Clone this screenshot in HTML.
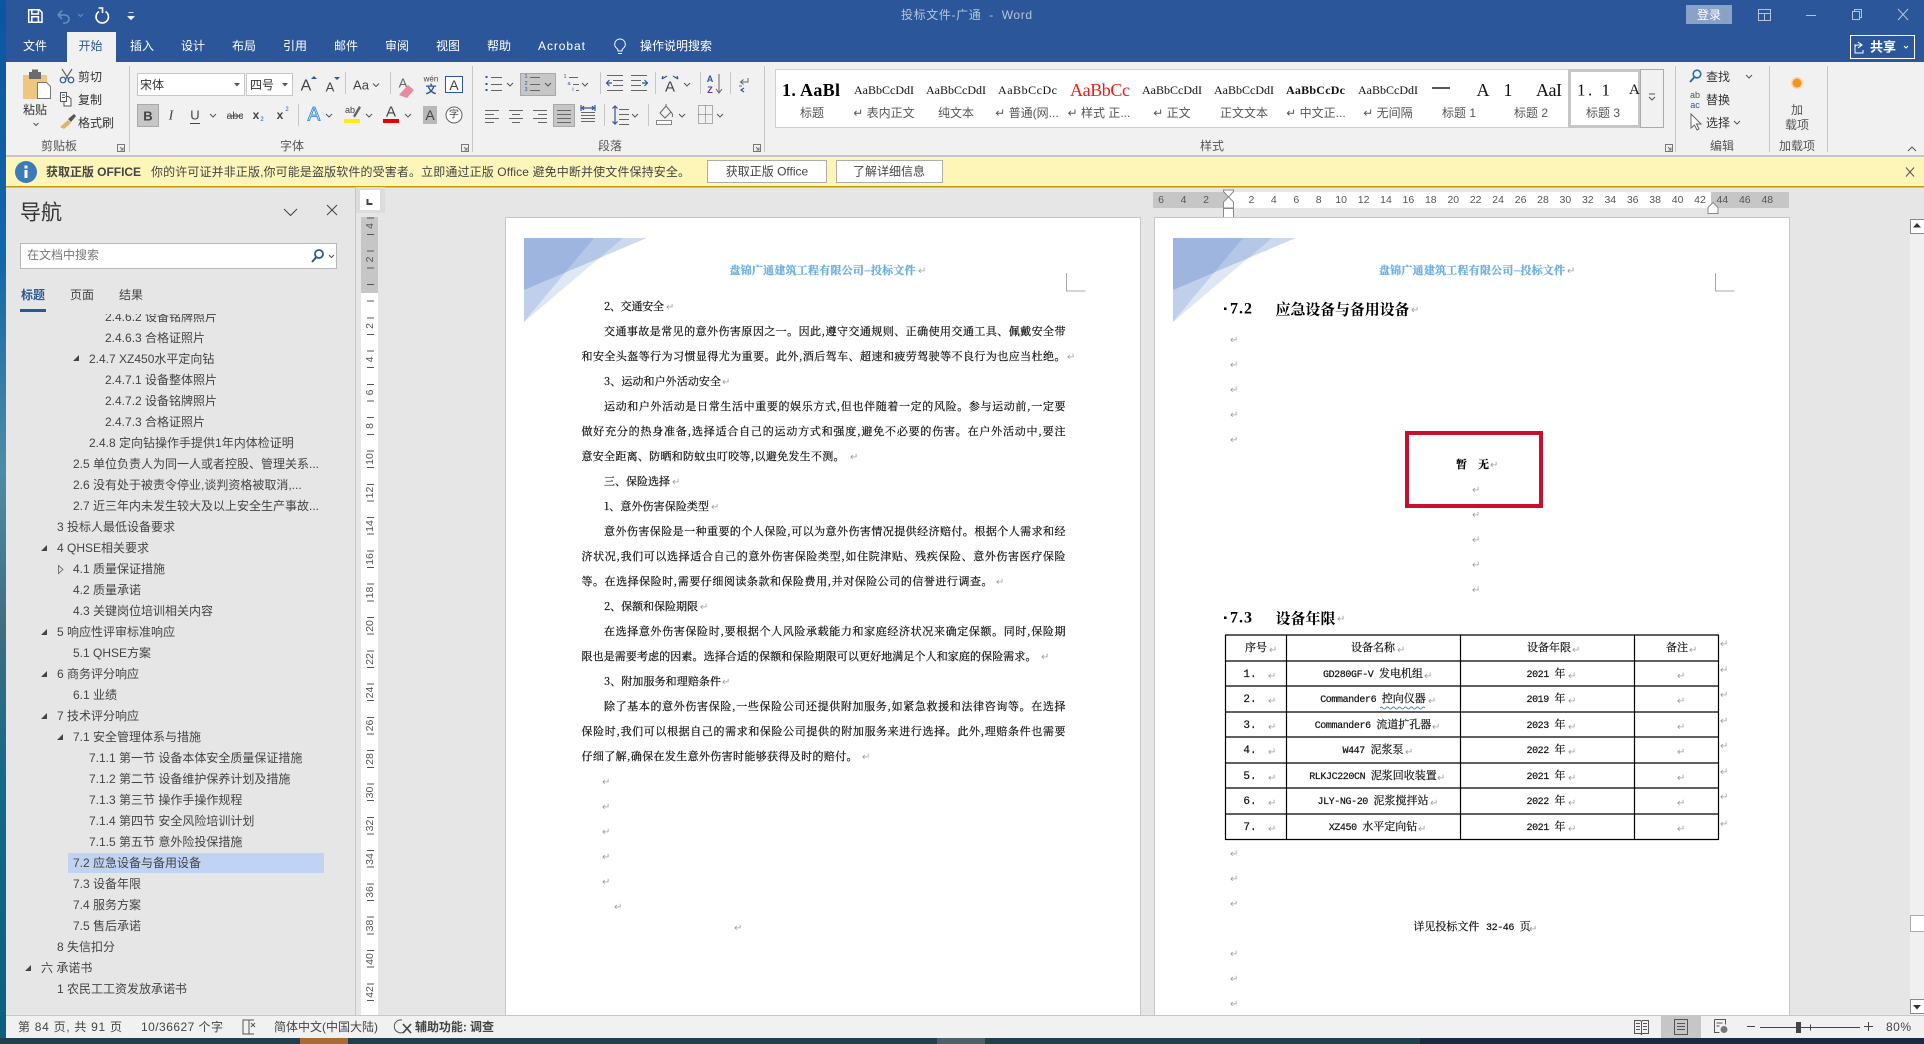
<!DOCTYPE html>
<html lang="zh-CN"><head><meta charset="utf-8"><title>投标文件-广通 - Word</title>
<style>
html,body{margin:0;padding:0;width:1924px;height:1044px;overflow:hidden;background:#e6e6e6}
svg{position:absolute;left:0;top:0;display:block}
text{dominant-baseline:central;font-family:"Liberation Sans","Noto Sans CJK SC",sans-serif;font-size:12px;fill:#444;white-space:pre}
.w{fill:#fff}.d{fill:#b4c4dc}.c{text-anchor:middle}
.g{font-size:12px;fill:#333}
.lb{font-size:12px;fill:#555;text-anchor:middle}
.s{font-family:"Liberation Serif","Noto Serif CJK SC",serif;font-size:12px;fill:#111}
.b{font-family:"Noto Serif CJK SC",serif;font-size:11px;fill:#111;stroke:#111;stroke-width:.22}
.h{font-family:"Noto Serif CJK SC",serif;font-size:11px;font-weight:700;fill:#6fb0e0;stroke:#6fb0e0;stroke-width:.3}
.hd{font-family:"Noto Serif CJK SC",serif;font-size:15px;font-weight:700;fill:#000}
.hn{font-family:"Liberation Serif",serif;font-size:16px;font-weight:700;fill:#000;letter-spacing:1px}
.r{font-family:"DejaVu Sans",sans-serif;font-size:10px;fill:#a0a0a0;transform:translate(1px,1.5px)}
.m{font-family:"Liberation Mono",monospace;font-size:10px;letter-spacing:-.4px}
.tb{font-family:"Liberation Mono","Noto Serif CJK SC",serif;font-size:11px;fill:#111;stroke:#111;stroke-width:.2;text-anchor:middle}
.hr{font-size:10.5px;fill:#555;text-anchor:middle}
.vr{font-size:10.5px;fill:#555;text-anchor:middle}
.lg{fill:none;stroke:#666;stroke-width:1}
.bl{fill:none;stroke:#2b579a;stroke-width:1.2}
.ch{fill:none;stroke:#555;stroke-width:1}
</style></head><body>
<svg width="1924" height="1044" viewBox="0 0 1924 1044" xmlns="http://www.w3.org/2000/svg">
<defs>
<linearGradient id="strip" x1="0" y1="0" x2="0" y2="1"><stop offset="0" stop-color="#0b55a0"/><stop offset=".25" stop-color="#1367a8"/><stop offset=".45" stop-color="#4d8ca6"/><stop offset=".6" stop-color="#3d7080"/><stop offset=".75" stop-color="#14688a"/><stop offset="1" stop-color="#0d5f80"/></linearGradient>
<clipPath id="treeclip"><rect x="6" y="314" width="349" height="702"/></clipPath>
</defs>
<!-- frame -->
<rect x="0" y="0" width="6" height="1044" fill="url(#strip)"/>
<rect x="0" y="1038" width="1924" height="6" fill="#21404c"/>
<rect x="300" y="1038" width="48" height="6" fill="#a96b35"/>
<rect x="937" y="1038" width="48" height="6" fill="#4c616a"/>
<rect x="1420" y="1038" width="504" height="6" fill="#1a2a42"/>
<rect x="6" y="0" width="1918" height="62" fill="#2b579a"/>
<rect x="6" y="62" width="1918" height="94" fill="#f1f1f1"/>
<rect x="6" y="155" width="1918" height="2" fill="#c6c6c6"/>
<rect x="6" y="157" width="1918" height="29" fill="#fdf6b8"/>
<rect x="6" y="186" width="1918" height="1.5" fill="#c19c00"/>
<rect x="67" y="32" width="49" height="30" fill="#f1f1f1"/>

<!-- QAT -->
<path d="M28.7 9.7h10.6l2.7 2.7v9.9H28.7z M31.8 9.7v4.3h6.6V9.7 M31.8 22.3v-5.5h6.6v5.5" fill="none" stroke="#fff" stroke-width="1.5"/>
<path d="M58 15l4-4.5M58 15l4 4M58 15h7a4 4 0 0 1 0 8h-2" fill="none" stroke="#6b8dbd" stroke-width="1.6"/>
<path d="M78 14l2.5 2.5 2.5-2.5" fill="none" stroke="#6b8dbd" stroke-width="1"/>
<path d="M99 11.5a6.2 6.2 0 1 0 6.5 0M98.500 8h4v5" fill="none" stroke="#fff" stroke-width="1.6"/>
<path d="M128.500 12.500h5M128 16.500h6l-3 3z" fill="#fff" stroke="#fff" stroke-width=".8"/>
<!-- title -->
<text x="901" y="15" class="d" textLength="131">投标文件-广通  -  Word</text>
<rect x="1686" y="5" width="46" height="19" fill="#8aa2c6"/>
<text x="1709" y="15" class="w c">登录</text>
<path d="M1758.500 9.500h12v11h-12zM1758.500 13.500h12M1764.500 13.500v7" fill="none" stroke="#b4c4dc"/>
<path d="M1806 15.500h10" stroke="#b4c4dc"/>
<path d="M1852.500 11.500h7v8h-7zM1854.500 11.500v-2h7v8h-2" fill="none" stroke="#b4c4dc"/>
<path d="M1898 9l10 11M1908 9l-10 11" stroke="#b4c4dc"/>
<!-- tabs -->
<text x="23" y="46" class="w">文件</text>
<text x="78.500" y="46" style="fill:#2b579a">开始</text>
<text x="130" y="46" class="w">插入</text>
<text x="181" y="46" class="w">设计</text>
<text x="232" y="46" class="w">布局</text>
<text x="283" y="46" class="w">引用</text>
<text x="334" y="46" class="w">邮件</text>
<text x="385" y="46" class="w">审阅</text>
<text x="436" y="46" class="w">视图</text>
<text x="487" y="46" class="w">帮助</text>
<text x="538" y="46" class="w" textLength="47">Acrobat</text>
<path d="M620 39a5.200 5.200 0 0 0-3 9.500c.7.6 1 1.400 1 2.500h4c0-1.100.3-1.900 1-2.500A5.200 5.200 0 0 0 620 39zM618 53.500h4" fill="none" stroke="#fff" stroke-width="1"/>
<text x="640" y="46" class="w" textLength="72">操作说明搜索</text>
<rect x="1850.500" y="35.500" width="64" height="23" fill="none" stroke="#fff"/>
<path d="M1858 42l4 3-4 3M1861.500 45h-4a2.500 2.500 0 0 0-2.500 2.500M1855 44v9h8v-3" fill="none" stroke="#fff" stroke-width="1"/>
<text x="1870" y="47" class="w" style="font-size:13px;font-weight:700">共享</text>
<path d="M1904 46l2 2 2-2" fill="none" stroke="#fff"/>

<!-- ribbon separators -->
<path d="M129.500 66v86M472.500 66v86M764.500 66v86M1675.500 66v86M1769.500 66v86M1827.500 66v86" stroke="#c6c6c6"/>
<!-- clipboard -->
<rect x="23" y="75" width="24" height="24" fill="#eec682"/>
<rect x="29" y="72" width="12" height="7" fill="#6b6b6b"/><rect x="32" y="69.500" width="6" height="4" fill="#6b6b6b"/>
<path d="M37.500 82.500h9l4 4v12h-13z" fill="#fff" stroke="#777"/>
<text x="35" y="110" class="g c">粘贴</text>
<path d="M33.500 123l2.500 2.500 2.500-2.500" class="ch"/>
<path d="M62 69l7 11M72 69l-7 11" fill="none" stroke="#666" stroke-width="1.200"/>
<circle cx="63" cy="80" r="2.800" class="bl"/><circle cx="71" cy="80" r="2.800" class="bl"/>
<text x="78" y="77" class="g">剪切</text>
<path d="M60.500 92.500h6v9h-6zM65.500 96.500h3l2.500 2.500v7h-7v-4" fill="#fff" stroke="#555"/>
<path d="M62 95h3M62 97.500h3" stroke="#2b579a"/>
<text x="78" y="100" class="g">复制</text>
<path d="M60 127l8-7 3 3-7 6z" fill="#e2b565"/><path d="M68 119l6-5 2 2-5 6z" fill="#555"/>
<text x="78" y="123" class="g">格式刷</text>
<text x="59" y="146" class="lb">剪贴板</text>
<path d="M117.500 144.500h7v7h-7zM120 147l3 3M123 147.500v2.500h-2.500" fill="none" stroke="#777"/>
<!-- font group -->
<rect x="137.500" y="73.500" width="107" height="22" fill="#fff" stroke="#c6c6c6"/>
<text x="140" y="85" class="g">宋体</text><path d="M234 83h6l-3 3.500z" fill="#555"/>
<rect x="246.500" y="73.500" width="46" height="22" fill="#fff" stroke="#c6c6c6"/>
<text x="250" y="85" class="g">四号</text><path d="M282 83h6l-3 3.500z" fill="#555"/>
<text x="306" y="86" class="c" style="font-size:16px">A</text><path d="M311 79h6l-3-3z" fill="#2b579a"/>
<text x="330" y="87" class="c" style="font-size:13px">A</text><path d="M334 77h6l-3 3z" fill="#2b579a"/>
<path d="M345.500 72v22M390.500 72v22M437 0" stroke="#c6c6c6"/>
<text x="361" y="85" class="c" style="font-size:13px">Aa</text><path d="M373 83.500l3 3 3-3" class="ch"/>
<text x="403" y="83" class="c" style="font-size:13px;fill:#666">A</text><path d="M399 95l9-10 6 5-7 8z" fill="#e88aa0"/>
<text x="431" y="79" class="c" style="font-size:8px">wén</text><text x="431" y="90" class="c" style="font-size:11px;fill:#2b579a;font-weight:700">文</text>
<rect x="445.500" y="76.500" width="17" height="16" fill="#fff" stroke="#2b579a"/><text x="454" y="85" class="c" style="font-size:14px">A</text>
<rect x="137" y="104" width="22" height="23" fill="#c6c6c6"/><rect x="137.500" y="104.500" width="21" height="22" fill="none" stroke="#a8a8a8"/>
<text x="148" y="116" class="c" style="font-weight:700;font-size:13px">B</text>
<text x="171" y="116" class="c" style="font-style:italic;font-family:'Liberation Serif',serif;font-size:14px">I</text>
<text x="195" y="115" class="c" style="font-size:13px">U</text><path d="M190 123.500h10" stroke="#444"/><path d="M210 114l3 3 3-3" class="ch"/>
<text x="235" y="116" class="c" style="font-size:10.500px">abc</text><path d="M227 116h16" stroke="#444"/>
<text x="256" y="115" class="c" style="font-weight:700;font-size:12px">x</text><text x="262" y="120" class="c" style="font-size:6px;fill:#2b579a">2</text>
<text x="280" y="115" class="c" style="font-weight:700;font-size:12px">x</text><text x="287" y="110" class="c" style="font-size:6px;fill:#2b579a">2</text>
<path d="M298.500 104v22M422 0" stroke="#c6c6c6"/>
<text x="314" y="115" class="c" style="font-size:19px;fill:#dbe8f8;stroke:#2f7fd0;stroke-width:.8">A</text><path d="M326 114l3 3 3-3" class="ch"/>
<text x="350" y="110" class="c" style="font-size:9px">ab</text><path d="M353 116l6-10 2 1.500-6 10z" fill="#666"/><rect x="344" y="119" width="16" height="4" fill="#ffee00"/><path d="M366 114l3 3 3-3" class="ch"/>
<text x="391" y="112" class="c" style="font-size:15px">A</text><rect x="383" y="119" width="16" height="4" fill="#e60000"/><path d="M405 114l3 3 3-3" class="ch"/>
<rect x="423" y="106" width="14" height="18" fill="#b8b8b8"/><text x="430" y="115" class="c" style="font-size:14px">A</text>
<circle cx="454" cy="115" r="8" fill="#fff" stroke="#666"/><text x="454" y="115" class="c" style="font-size:10px">字</text>
<text x="292" y="146" class="lb">字体</text>
<path d="M461.500 144.500h7v7h-7zM464 147l3 3M467 147.500v2.500h-2.500" fill="none" stroke="#777"/>
<!-- paragraph group -->
<path d="M491 77.500h11M491 84.500h11M491 90.500h11" class="lg"/><path d="M485.500 76h2v2h-2zM485.500 83h2v2h-2zM485.500 89h2v2h-2z" fill="#2b579a"/><path d="M507 83l3 3 3-3" class="ch"/>
<rect x="520" y="73" width="36" height="23" fill="#c6c6c6"/><rect x="520.500" y="73.500" width="35" height="22" fill="none" stroke="#a8a8a8"/>
<path d="M530 77.500h10M530 84.500h10M530 90.500h10" class="lg"/><text x="526" y="77" class="c" style="font-size:5.500px;fill:#2b579a">1</text><text x="526" y="84" class="c" style="font-size:5.500px;fill:#2b579a">2</text><text x="526" y="90" class="c" style="font-size:5.500px;fill:#2b579a">3</text><path d="M545 83l3 3 3-3" class="ch"/>
<text x="565" y="77" class="c" style="font-size:5.500px;fill:#2b579a">1</text><text x="569" y="84" class="c" style="font-size:5.500px;fill:#2b579a">a</text><text x="573" y="90" class="c" style="font-size:5.500px;fill:#2b579a">i</text>
<path d="M569 77.500h9M573 84.500h6M576 90.500h3" class="lg"/><path d="M582 83l3 3 3-3" class="ch"/>
<path d="M600.500 72v22M655.500 72v22M700.500 72v22M730.500 72v22" stroke="#c6c6c6"/>
<path d="M607 75.500h16M613 80.500h10M613 85.500h10M607 90.500h16" class="lg"/><path d="M612 83h-5m2.500-3l-3 3 3 3" class="bl"/>
<path d="M631 75.500h16M631 80.500h10M631 85.500h10M631 90.500h16" class="lg"/><path d="M642 83h5m-2.500-3l3 3-3 3" class="bl"/>
<text x="670" y="87" class="c" style="font-size:15px">A</text><path d="M662 79l5-3M678 79l-5-3M662 79l1-3M678 79l-1-3" class="bl"/><path d="M684 83l3 3 3-3" class="ch"/>
<text x="710" y="79" class="c" style="font-size:9px;fill:#2b579a;font-weight:700">A</text><text x="710" y="90" class="c" style="font-size:9px;fill:#7030a0;font-weight:700">Z</text><path d="M719 74v19m-3-4l3 4 3-4" class="lg"/>
<path d="M748 78v4h-7m2.500-2.500l-3 2.500 3 2.500M742 86h-3m0 0v0" class="lg"/><path d="M744 88l-3 2 3 2" class="bl"/>
<path d="M485 110.500h14M485 114.500h9M485 118.500h14M485 122.500h9" class="lg"/>
<path d="M509 110.500h14M512 114.500h8M509 118.500h14M512 122.500h8" class="lg"/>
<path d="M533 110.500h14M538 114.500h9M533 118.500h14M538 122.500h9" class="lg"/>
<rect x="553" y="104" width="22" height="23" fill="#c6c6c6"/><rect x="553.500" y="104.500" width="21" height="22" fill="none" stroke="#a8a8a8"/><path d="M557 110.500h14M557 114.500h14M557 118.500h14M557 122.500h14" class="lg"/>
<path d="M581 112.500h14M581 115.500h14M581 118.500h14M581 121.500h14" class="lg"/><path d="M582 108h12M584 106l-2 2 2 2M592 106l2 2-2 2M581 105v6M595 105v6" class="bl"/>
<path d="M604.500 104v22M648.500 104v22" stroke="#c6c6c6"/>
<path d="M619 109.500h10M619 114.500h10M619 119.500h10M619 124.500h10" class="lg"/><path d="M615 106v18m-2.500-15.500l2.500-2.500 2.500 2.500m-5 13l2.500 2.500 2.500-2.500" class="bl"/><path d="M632 114l3 3 3-3" class="ch"/>
<path d="M660 113l6-7 5 6-6 6zM666 106v-2" fill="none" stroke="#666"/><path d="M671 112c2 2 2 4 1 5" fill="none" stroke="#666"/><rect x="656.500" y="120.500" width="15" height="4" fill="#fff" stroke="#888"/><path d="M679 114l3 3 3-3" class="ch"/>
<path d="M698.500 105.500h14v18h-14zM698.500 114.500h14M705.500 105.500v18" fill="none" stroke="#666" stroke-dasharray="1 1"/><path d="M717 114l3 3 3-3" class="ch"/>
<text x="610" y="146" class="lb">段落</text>
<path d="M753.500 144.500h7v7h-7zM756 147l3 3M759 147.500v2.500h-2.500" fill="none" stroke="#777"/>
<!-- styles -->
<rect x="775.500" y="69.500" width="888" height="58" fill="#fff" stroke="#d0d0d0"/>
<rect x="1569.500" y="70.500" width="70" height="56" fill="#fff" stroke="#c6c6c6" stroke-width="3"/>
<rect x="1640.500" y="69.500" width="23" height="58" fill="#f1f1f1" stroke="#aaa"/>
<path d="M1649 94h6M1649 97l3 3 3-3" class="ch"/>
<text x="782" y="90" class="s" textLength="58" style="font-weight:700;font-size:18px;fill:#000">1. AaBl</text>
<text x="854" y="90" class="s" textLength="60">AaBbCcDdI</text>
<text x="926" y="90" class="s" textLength="60">AaBbCcDdI</text>
<text x="998" y="90" class="s" textLength="59">AaBbCcDc</text>
<text x="1070" y="90" class="s" textLength="60" style="font-size:18px;fill:#f01818">AaBbCc</text>
<text x="1142" y="90" class="s" textLength="60">AaBbCcDdI</text>
<text x="1214" y="90" class="s" textLength="60">AaBbCcDdI</text>
<text x="1286" y="90" class="s" textLength="59" style="font-weight:700">AaBbCcDc</text>
<text x="1358" y="90" class="s" textLength="60">AaBbCcDdI</text>
<path d="M1432 88h18" stroke="#222" stroke-width="1.500"/>
<text x="1483" y="90" class="c s" style="font-size:18px">A</text>
<text x="1508" y="90" class="c s" style="font-size:18px">1</text>
<text x="1536" y="90" class="s" textLength="26" style="font-size:18px">AaI</text>
<text x="1577" y="90" class="s" textLength="33" style="font-size:17px">1. 1</text>
<text x="1629" y="90" class="s" style="font-size:15px">A</text>
<text x="812" y="113" class="lb">标题</text>
<text x="884" y="113" class="lb">↵ 表内正文</text>
<text x="956" y="113" class="lb">纯文本</text>
<text x="1027" y="113" class="lb">↵ 普通(网...</text>
<text x="1099" y="113" class="lb">↵ 样式 正...</text>
<text x="1172" y="113" class="lb">↵ 正文</text>
<text x="1244" y="113" class="lb">正文文本</text>
<text x="1316" y="113" class="lb">↵ 中文正...</text>
<text x="1388" y="113" class="lb">↵ 无间隔</text>
<text x="1459" y="113" class="lb">标题 1</text>
<text x="1531" y="113" class="lb">标题 2</text>
<text x="1603" y="113" class="lb">标题 3</text>
<text x="1212" y="146" class="lb">样式</text>
<path d="M1665.500 144.500h7v7h-7zM1668 147l3 3M1671 147.500v2.500h-2.500" fill="none" stroke="#777"/>
<!-- editing -->
<circle cx="1697" cy="74" r="3.800" fill="none" stroke="#2b6cb5" stroke-width="1.600"/><path d="M1694.500 77l-4.500 5" stroke="#2b6cb5" stroke-width="2"/>
<text x="1706" y="77" class="g">查找</text><path d="M1746 75l3 3 3-3" class="ch"/>
<text x="1695" y="95" class="c" style="font-size:9px;fill:#555">ab</text><text x="1695" y="105" class="c" style="font-size:9px;fill:#2b579a">ac</text>
<text x="1706" y="100" class="g">替换</text>
<path d="M1691 114v14l3.500-3 2.500 5 2-1-2.500-5h4.500z" fill="#fff" stroke="#666"/>
<text x="1706" y="123" class="g">选择</text><path d="M1734 121l3 3 3-3" class="ch"/>
<text x="1722" y="146" class="lb">编辑</text>
<circle cx="1797" cy="83" r="4.500" fill="#f7941d"/><circle cx="1797" cy="83" r="6" fill="#f7941d" opacity=".25"/>
<text x="1797" y="110" class="lb">加</text><text x="1797" y="125" class="lb">载项</text>
<text x="1797" y="146" class="lb">加载项</text>
<path d="M1908 151l4-4 4 4" class="ch"/>
<!-- notification -->
<circle cx="26" cy="172" r="11" fill="#3c7ab8"/><rect x="24.500" y="170" width="3" height="8" fill="#fff"/><rect x="24.500" y="165.500" width="3" height="3" fill="#fff"/>
<text x="46" y="172" style="font-weight:700;fill:#444" textLength="95">获取正版 OFFICE</text>
<text x="151" y="172" fill="#555" textLength="539">你的许可证并非正版,你可能是盗版软件的受害者。立即通过正版 Office 避免中断并使文件保持安全。</text>
<rect x="707.500" y="160.500" width="119" height="22" fill="#fff" stroke="#adadad"/>
<text x="767" y="171.500" class="c">获取正版 Office</text>
<rect x="836.500" y="160.500" width="106" height="22" fill="#fff" stroke="#adadad"/>
<text x="889" y="171.500" class="c">了解详细信息</text>
<path d="M1906 167.500l8 9M1914 167.500l-8 9" stroke="#555"/>

<!-- nav pane -->
<path d="M355.500 187v829" stroke="#c6c6c6"/>
<text x="20" y="213" style="font-size:21px;fill:#333">导航</text>
<path d="M284 209l6.500 6.500 6.500-6.500M327 205l10 10M337 205l-10 10" fill="none" stroke="#444"/>
<rect x="20.500" y="243.500" width="316" height="25" fill="#fff" stroke="#b8b8b8"/>
<text x="27" y="255" style="fill:#777">在文档中搜索</text>
<circle cx="319" cy="254" r="4" fill="none" stroke="#2b579a" stroke-width="1.800"/><path d="M316 257.500l-4 4.500" stroke="#2b579a" stroke-width="2"/><path d="M329 255l2.500 2.500 2.500-2.500" class="ch"/>
<text x="21" y="295" style="fill:#2b579a;font-weight:700">标题</text>
<text x="70" y="295">页面</text>
<text x="119" y="295">结果</text>
<rect x="20" y="309" width="26" height="3" fill="#2b579a"/>
<rect x="68" y="853" width="256" height="20" fill="#c0d3f2"/>
<g clip-path="url(#treeclip)"><g transform="translate(0 1)">
<text x="105" y="316">2.4.6.2 设备铭牌照片</text>
<text x="105" y="337">2.4.6.3 合格证照片</text>
<text x="89" y="358">2.4.7 XZ450水平定向钻</text>
<text x="105" y="379">2.4.7.1 设备整体照片</text>
<text x="105" y="400">2.4.7.2 设备铭牌照片</text>
<text x="105" y="421">2.4.7.3 合格证照片</text>
<text x="89" y="442">2.4.8 定向钻操作手提供1年内体检证明</text>
<text x="73" y="463">2.5 单位负责人为同一人或者控股、管理关系...</text>
<text x="73" y="484">2.6 没有处于被责令停业,谈判资格被取消,...</text>
<text x="73" y="505">2.7 近三年内未发生较大及以上安全生产事故...</text>
<text x="57" y="526">3 投标人最低设备要求</text>
<text x="57" y="547">4 QHSE相关要求</text>
<text x="73" y="568">4.1 质量保证措施</text>
<text x="73" y="589">4.2 质量承诺</text>
<text x="73" y="610">4.3 关键岗位培训相关内容</text>
<text x="57" y="631">5 响应性评审标准响应</text>
<text x="73" y="652">5.1 QHSE方案</text>
<text x="57" y="673">6 商务评分响应</text>
<text x="73" y="694">6.1 业绩</text>
<text x="57" y="715">7 技术评分响应</text>
<text x="73" y="736">7.1 安全管理体系与措施</text>
<text x="89" y="757">7.1.1 第一节 设备本体安全质量保证措施</text>
<text x="89" y="778">7.1.2 第二节 设备维护保养计划及措施</text>
<text x="89" y="799">7.1.3 第三节 操作手操作规程</text>
<text x="89" y="820">7.1.4 第四节 安全风险培训计划</text>
<text x="89" y="841">7.1.5 第五节 意外险投保措施</text>
<text x="73" y="862">7.2 应急设备与备用设备</text>
<text x="73" y="883">7.3 设备年限</text>
<text x="73" y="904">7.4 服务方案</text>
<text x="73" y="925">7.5 售后承诺</text>
<text x="57" y="946">8 失信扣分</text>
<text x="41" y="967">六 承诺书</text>
<text x="57" y="988">1 农民工工资发放承诺书</text>
</g></g>
<path d="M79 355v6h-6zM47 545v6h-6zM47 629v6h-6zM47 671v6h-6zM47 713v6h-6zM63 734v6h-6zM31 965v6h-6z" fill="#444"/>
<path d="M58.500 565.500v8l4.500-4z" fill="none" stroke="#777"/>

<!-- vertical ruler -->
<rect x="356" y="187" width="29" height="26" fill="#dcdcdc"/>
<rect x="360" y="190" width="20" height="20" fill="#fff"/>
<path d="M367.500 199v5h5" fill="none" stroke="#444" stroke-width="2"/>
<rect x="361" y="217" width="17" height="799" fill="#fff"/>
<rect x="361" y="217" width="17" height="76" fill="#c6c6c6"/>
<path stroke="#555" d="M367 218h7M367 234.500h7M367 251h7M367 268h7M367 284.500h7M367 301h7M367 318h7M367 334.500h7M367 351h7M367 367.500h7M367 384.500h7M367 401h7M367 417.500h7M367 434.500h7M367 451h7M367 467.500h7M367 484.500h7M367 501h7M367 517.500h7M367 534h7M367 551h7M367 567.500h7M367 584h7M367 601h7M367 617.500h7M367 634h7M367 651h7M367 667.500h7M367 684h7M367 700.500h7M367 717.500h7M367 734h7M367 750.500h7M367 767.500h7M367 784h7M367 800.500h7M367 817.500h7M367 834h7M367 850.500h7M367 867h7M367 884h7M367 900.500h7M367 917h7M367 934h7M367 950.500h7M367 967h7M367 984h7M367 1000.500h7"/>
<text class="vr" transform="translate(370 226) rotate(-90)">4</text>
<text class="vr" transform="translate(370 259.500) rotate(-90)">2</text>
<text class="vr" transform="translate(370 326) rotate(-90)">2</text>
<text class="vr" transform="translate(370 359.500) rotate(-90)">4</text>
<text class="vr" transform="translate(370 392.500) rotate(-90)">6</text>
<text class="vr" transform="translate(370 426) rotate(-90)">8</text>
<text class="vr" transform="translate(370 459) rotate(-90)">10</text>
<text class="vr" transform="translate(370 492.500) rotate(-90)">12</text>
<text class="vr" transform="translate(370 526) rotate(-90)">14</text>
<text class="vr" transform="translate(370 559) rotate(-90)">16</text>
<text class="vr" transform="translate(370 592.500) rotate(-90)">18</text>
<text class="vr" transform="translate(370 626) rotate(-90)">20</text>
<text class="vr" transform="translate(370 659) rotate(-90)">22</text>
<text class="vr" transform="translate(370 692.500) rotate(-90)">24</text>
<text class="vr" transform="translate(370 725.500) rotate(-90)">26</text>
<text class="vr" transform="translate(370 759) rotate(-90)">28</text>
<text class="vr" transform="translate(370 792.500) rotate(-90)">30</text>
<text class="vr" transform="translate(370 825.500) rotate(-90)">32</text>
<text class="vr" transform="translate(370 859) rotate(-90)">34</text>
<text class="vr" transform="translate(370 892) rotate(-90)">36</text>
<text class="vr" transform="translate(370 925.500) rotate(-90)">38</text>
<text class="vr" transform="translate(370 959) rotate(-90)">40</text>
<text class="vr" transform="translate(370 992) rotate(-90)">42</text>

<!-- horizontal ruler -->
<rect x="1153" y="192" width="636" height="16" fill="#c6c6c6"/>
<rect x="1228" y="192" width="483" height="16" fill="#fff"/>
<text class="hr" x="1161" y="200">6</text><text class="hr" x="1183.600" y="200">4</text><text class="hr" x="1206" y="200">2</text>
<text class="hr" x="1251.400" y="200">2</text><text class="hr" x="1273.800" y="200">4</text><text class="hr" x="1296.300" y="200">6</text><text class="hr" x="1318.700" y="200">8</text><text class="hr" x="1341.100" y="200">10</text><text class="hr" x="1363.600" y="200">12</text><text class="hr" x="1386" y="200">14</text><text class="hr" x="1408.400" y="200">16</text><text class="hr" x="1430.800" y="200">18</text><text class="hr" x="1453.300" y="200">20</text><text class="hr" x="1475.700" y="200">22</text><text class="hr" x="1498.100" y="200">24</text><text class="hr" x="1520.600" y="200">26</text><text class="hr" x="1543" y="200">28</text><text class="hr" x="1565.400" y="200">30</text><text class="hr" x="1587.800" y="200">32</text><text class="hr" x="1610.300" y="200">34</text><text class="hr" x="1632.700" y="200">36</text><text class="hr" x="1655.100" y="200">38</text><text class="hr" x="1677.600" y="200">40</text><text class="hr" x="1700" y="200">42</text><text class="hr" x="1722.400" y="200">44</text><text class="hr" x="1744.800" y="200">46</text><text class="hr" x="1767.300" y="200">48</text>
<path d="M1223.500 190v1.500l5 5.500 5-5.500V190zM1223.500 208v-6l5-5 5 5v6zM1223.500 208.500h10v11h-10z" fill="#fff" stroke="#8a8a8a"/>
<path d="M1708 213.500v-6l5-5 5 5v6z" fill="#fff" stroke="#8a8a8a"/>

<!-- pages -->
<rect x="505.500" y="217.500" width="635" height="800" fill="#fff" stroke="#c6c6c6"/>
<rect x="1154.500" y="217.500" width="635" height="800" fill="#fff" stroke="#c6c6c6"/>
<!-- header art left -->
<g fill="#4472c4"><path d="M524 238h122.700L524 290z" fill-opacity=".27"/><path d="M524 238h99L524 322z" fill-opacity=".17"/><path d="M524 238h70L524 322z" fill-opacity=".2"/></g>
<g fill="#4472c4"><path d="M1173 238h122.700L1173 290z" fill-opacity=".27"/><path d="M1173 238h99L1173 322z" fill-opacity=".17"/><path d="M1173 238h70L1173 322z" fill-opacity=".2"/></g>
<text x="729.500" y="270" class="h" textLength="186">盘锦广通建筑工程有限公司–投标文件</text><text x="917" y="270" class="r">↵</text>
<text x="1379" y="270" class="h" textLength="186">盘锦广通建筑工程有限公司–投标文件</text><text x="1566" y="270" class="r">↵</text>
<path d="M1066.500 273v18h19M1715.500 273v18h19" fill="none" stroke="#a8a8a8"/>

<!-- left page text -->
<text class="b" x="604" y="306" textLength="60">2、交通安全</text><text class="r" x="665" y="306">↵</text>
<text class="b" x="604" y="331" textLength="461.500">交通事故是常见的意外伤害原因之一。因此,遵守交通规则、正确使用交通工具、佩戴安全带</text>
<text class="b" x="581.500" y="356" textLength="484">和安全头盔等行为习惯显得尤为重要。此外,酒后驾车、超速和疲劳驾驶等不良行为也应当杜绝。</text><text class="r" x="1066" y="356">↵</text>
<text class="b" x="604" y="381" textLength="117">3、运动和户外活动安全</text><text class="r" x="721" y="381">↵</text>
<text class="b" x="604" y="406" textLength="461.500">运动和户外活动是日常生活中重要的娱乐方式,但也伴随着一定的风险。参与运动前,一定要</text>
<text class="b" x="581.500" y="431" textLength="484">做好充分的热身准备,选择适合自己的运动方式和强度,避免不必要的伤害。在户外活动中,要注</text>
<text class="b" x="581.500" y="456" textLength="263">意安全距离、防晒和防蚊虫叮咬等,以避免发生不测。</text><text class="r" x="849" y="456">↵</text>
<text class="b" x="604" y="481" textLength="66">三、保险选择</text><text class="r" x="671" y="481">↵</text>
<text class="b" x="604" y="506" textLength="105">1、意外伤害保险类型</text><text class="r" x="710" y="506">↵</text>
<text class="b" x="604" y="531" textLength="461.500">意外伤害保险是一种重要的个人保险,可以为意外伤害情况提供经济赔付。根据个人需求和经</text>
<text class="b" x="581.500" y="556" textLength="484">济状况,我们可以选择适合自己的意外伤害保险类型,如住院津贴、残疾保险、意外伤害医疗保险</text>
<text class="b" x="581.500" y="581" textLength="411">等。在选择保险时,需要仔细阅读条款和保险费用,并对保险公司的信誉进行调查。</text><text class="r" x="995" y="581">↵</text>
<text class="b" x="604" y="606" textLength="94">2、保额和保险期限</text><text class="r" x="699" y="606">↵</text>
<text class="b" x="604" y="631" textLength="461.500">在选择意外伤害保险时,要根据个人风险承载能力和家庭经济状况来确定保额。同时,保险期</text>
<text class="b" x="581.500" y="656" textLength="455">限也是需要考虑的因素。选择合适的保额和保险期限可以更好地满足个人和家庭的保险需求。</text><text class="r" x="1040" y="656">↵</text>
<text class="b" x="604" y="681" textLength="117">3、附加服务和理赔条件</text><text class="r" x="721" y="681">↵</text>
<text class="b" x="604" y="706" textLength="461.500">除了基本的意外伤害保险,一些保险公司还提供附加服务,如紧急救援和法律咨询等。在选择</text>
<text class="b" x="581.500" y="731" textLength="484">保险时,我们可以根据自己的需求和保险公司提供的附加服务来进行选择。此外,理赔条件也需要</text>
<text class="b" x="581.500" y="756" textLength="276">仔细了解,确保在发生意外伤害时能够获得及时的赔付。</text><text class="r" x="861" y="756">↵</text>
<text class="r" x="601" y="781">↵</text><text class="r" x="601" y="806">↵</text><text class="r" x="601" y="831">↵</text><text class="r" x="601" y="856">↵</text><text class="r" x="601" y="881">↵</text>
<text class="r" x="613" y="906">↵</text>
<text class="r" x="733" y="927">↵</text>

<!-- right page text -->
<rect x="1224" y="307.500" width="2.500" height="2.500" fill="#000"/>
<text class="hn" x="1230" y="309">7.2</text><text class="hd" x="1275.500" y="309" textLength="134">应急设备与备用设备</text><text class="r" x="1410" y="309">↵</text>
<text class="r" x="1229" y="339">↵</text><text class="r" x="1229" y="364">↵</text><text class="r" x="1229" y="389">↵</text><text class="r" x="1229" y="414">↵</text><text class="r" x="1229" y="439">↵</text>
<rect x="1407" y="433" width="134" height="73" fill="none" stroke="#c8102e" stroke-width="4"/>
<text class="b" x="1456" y="464" style="font-weight:700;fill:#000">暂</text><text class="b" x="1478" y="464" style="font-weight:700;fill:#000">无</text><text class="r" x="1489" y="464">↵</text>
<text class="r" x="1471" y="489">↵</text><text class="r" x="1471" y="514">↵</text><text class="r" x="1471" y="539">↵</text><text class="r" x="1471" y="564">↵</text><text class="r" x="1471" y="589">↵</text>
<rect x="1224" y="616.500" width="2.500" height="2.500" fill="#000"/>
<text class="hn" x="1230" y="618">7.3</text><text class="hd" x="1275.500" y="618" textLength="60">设备年限</text><text class="r" x="1336" y="618">↵</text>
<!-- table -->
<path d="M1225.500 635h493M1225.500 661h493M1225.500 686h493M1225.500 712h493M1225.500 737h493M1225.500 763h493M1225.500 788h493M1225.500 814h493M1225.500 839.500h493M1225.500 634.500v205.500M1286.500 634.500v205.500M1460.500 634.500v205.500M1634.500 634.500v205.500M1718.500 634.500v205.500" fill="none" stroke="#000" stroke-width="1.200"/>
<text class="tb" x="1256" y="649">序号</text><text class="r" x="1268" y="649">↵</text>
<text class="tb" x="1373" y="649">设备名称</text><text class="r" x="1396" y="649">↵</text>
<text class="tb" x="1549" y="649">设备年限</text><text class="r" x="1571" y="649">↵</text>
<text class="tb" x="1677" y="649">备注</text><text class="r" x="1688" y="649">↵</text>
<text class="tb" x="1250" y="675">1.</text><text class="tb" x="1250" y="700">2.</text><text class="tb" x="1250" y="726">3.</text><text class="tb" x="1250" y="751">4.</text><text class="tb" x="1250" y="777">5.</text><text class="tb" x="1250" y="802">6.</text><text class="tb" x="1250" y="828">7.</text>
<text class="r" x="1267" y="675">↵</text><text class="r" x="1267" y="700">↵</text><text class="r" x="1267" y="726">↵</text><text class="r" x="1267" y="751">↵</text><text class="r" x="1267" y="777">↵</text><text class="r" x="1267" y="802">↵</text><text class="r" x="1267" y="828">↵</text>
<text class="tb" x="1373" y="675"><tspan class="m">GD280GF-V </tspan>发电机组</text><text class="r" x="1423" y="675">↵</text>
<text class="tb" x="1373" y="700"><tspan class="m">Commander6 </tspan>控向仪器</text><text class="r" x="1427" y="700">↵</text>
<text class="tb" x="1373" y="726"><tspan class="m">Commander6 </tspan>流道扩孔器</text><text class="r" x="1431" y="726">↵</text>
<text class="tb" x="1373" y="751"><tspan class="m">W447 </tspan>泥浆泵</text><text class="r" x="1404" y="751">↵</text>
<text class="tb" x="1373" y="777"><tspan class="m">RLKJC220CN </tspan>泥浆回收装置</text><text class="r" x="1436" y="777">↵</text>
<text class="tb" x="1373" y="802"><tspan class="m">JLY-NG-20 </tspan>泥浆搅拌站</text><text class="r" x="1429" y="802">↵</text>
<text class="tb" x="1373" y="828"><tspan class="m">XZ450 </tspan>水平定向钻</text><text class="r" x="1417" y="828">↵</text>
<path d="M1380 718q1.500 -2 3 0t3 0 3 0 3 0 3 0 3 0 3 0 3 0 3 0 3 0 3 0 3 0 3 0 3 0 3 0" fill="none" stroke="#4a7fd0" transform="translate(0 -10)"/>
<text class="tb" x="1546" y="675"><tspan class="m">2021 </tspan>年</text><text class="r" x="1567" y="675">↵</text>
<text class="tb" x="1546" y="700"><tspan class="m">2019 </tspan>年</text><text class="r" x="1567" y="700">↵</text>
<text class="tb" x="1546" y="726"><tspan class="m">2023 </tspan>年</text><text class="r" x="1567" y="726">↵</text>
<text class="tb" x="1546" y="751"><tspan class="m">2022 </tspan>年</text><text class="r" x="1567" y="751">↵</text>
<text class="tb" x="1546" y="777"><tspan class="m">2021 </tspan>年</text><text class="r" x="1567" y="777">↵</text>
<text class="tb" x="1546" y="802"><tspan class="m">2022 </tspan>年</text><text class="r" x="1567" y="802">↵</text>
<text class="tb" x="1546" y="828"><tspan class="m">2021 </tspan>年</text><text class="r" x="1567" y="828">↵</text>
<text class="r" x="1676" y="675">↵</text><text class="r" x="1676" y="700">↵</text><text class="r" x="1676" y="726">↵</text><text class="r" x="1676" y="751">↵</text><text class="r" x="1676" y="777">↵</text><text class="r" x="1676" y="802">↵</text><text class="r" x="1676" y="828">↵</text>
<text class="r" x="1719" y="643">↵</text><text class="r" x="1719" y="669">↵</text><text class="r" x="1719" y="694">↵</text><text class="r" x="1719" y="720">↵</text><text class="r" x="1719" y="745">↵</text><text class="r" x="1719" y="771">↵</text><text class="r" x="1719" y="796">↵</text><text class="r" x="1719" y="823">↵</text>
<text class="r" x="1229" y="853">↵</text><text class="r" x="1229" y="878">↵</text><text class="r" x="1229" y="903">↵</text>
<text class="tb" x="1472" y="928"><tspan>详见投标文件 </tspan><tspan class="m">32-46 </tspan>页</text><text class="r" x="1528" y="928">↵</text>
<text class="r" x="1229" y="953">↵</text><text class="r" x="1229" y="978">↵</text><text class="r" x="1229" y="1003">↵</text>

<!-- scrollbar -->
<rect x="1910" y="219" width="14" height="797" fill="#f0f0f0"/>
<rect x="1910.500" y="219.500" width="14" height="14" fill="#fff" stroke="#8a8a8a"/><path d="M1913 227.500h8l-4-4.500z" fill="#333"/>
<rect x="1910.500" y="915.500" width="14" height="16" fill="#fff" stroke="#aaa"/>
<rect x="1910.500" y="999.500" width="14" height="14" fill="#fff" stroke="#8a8a8a"/><path d="M1913 1005h8l-4 4.500z" fill="#333"/>

<!-- status bar -->
<rect x="6" y="1016" width="1918" height="22" fill="#f1f1f1"/>
<rect x="6" y="1015" width="1918" height="1" fill="#c6c6c6"/>
<text x="18" y="1027" textLength="104">第 84 页, 共 91 页</text>
<text x="141" y="1027" textLength="82">10/36627 个字</text>
<path d="M243 1020h6v14h-6zM249 1020h5M249 1034h5" fill="none" stroke="#555"/><path d="M251 1023l4 4M255 1023l-4 4" stroke="#555"/>
<text x="274" y="1027" textLength="104">简体中文(中国大陆)</text>
<path d="M402 1020a6.500 6.500 0 1 0 1 12.500" fill="none" stroke="#555"/><path d="M403 1024l8 9M411 1024l-8 9" stroke="#444" stroke-width="1.600"/>
<text x="415" y="1027" style="font-weight:700" textLength="79">辅助功能: 调查</text>
<path d="M1634.500 1020.500h6l1 1 1-1h6v13h-6l-1 1-1-1h-6zM1641.500 1021v13M1636 1023.500h4M1636 1026.500h4M1636 1029.500h4M1643 1023.500h4M1643 1026.500h4M1643 1029.500h4" fill="none" stroke="#555"/>
<rect x="1661" y="1016" width="40" height="22" fill="#c6c6c6"/>
<path d="M1674.500 1019.500h13v15h-13zM1677 1023.500h8M1677 1026.500h8M1677 1029.500h8" fill="none" stroke="#555"/>
<path d="M1714.500 1019.500h11v5M1714.500 1019.500v13h5M1716.500 1023h6M1716.500 1026h3" fill="none" stroke="#555"/><circle cx="1724" cy="1029.500" r="3.500" fill="#777"/>
<path d="M1747 1026.500h8M1760 1027.500h100M1810.500 1024.500v6M1864 1026.500h9M1868.500 1022v9" stroke="#444"/>
<rect x="1796" y="1022" width="5" height="11" fill="#444"/>
<text x="1886" y="1027" textLength="25">80%</text>
</svg>
</body></html>
